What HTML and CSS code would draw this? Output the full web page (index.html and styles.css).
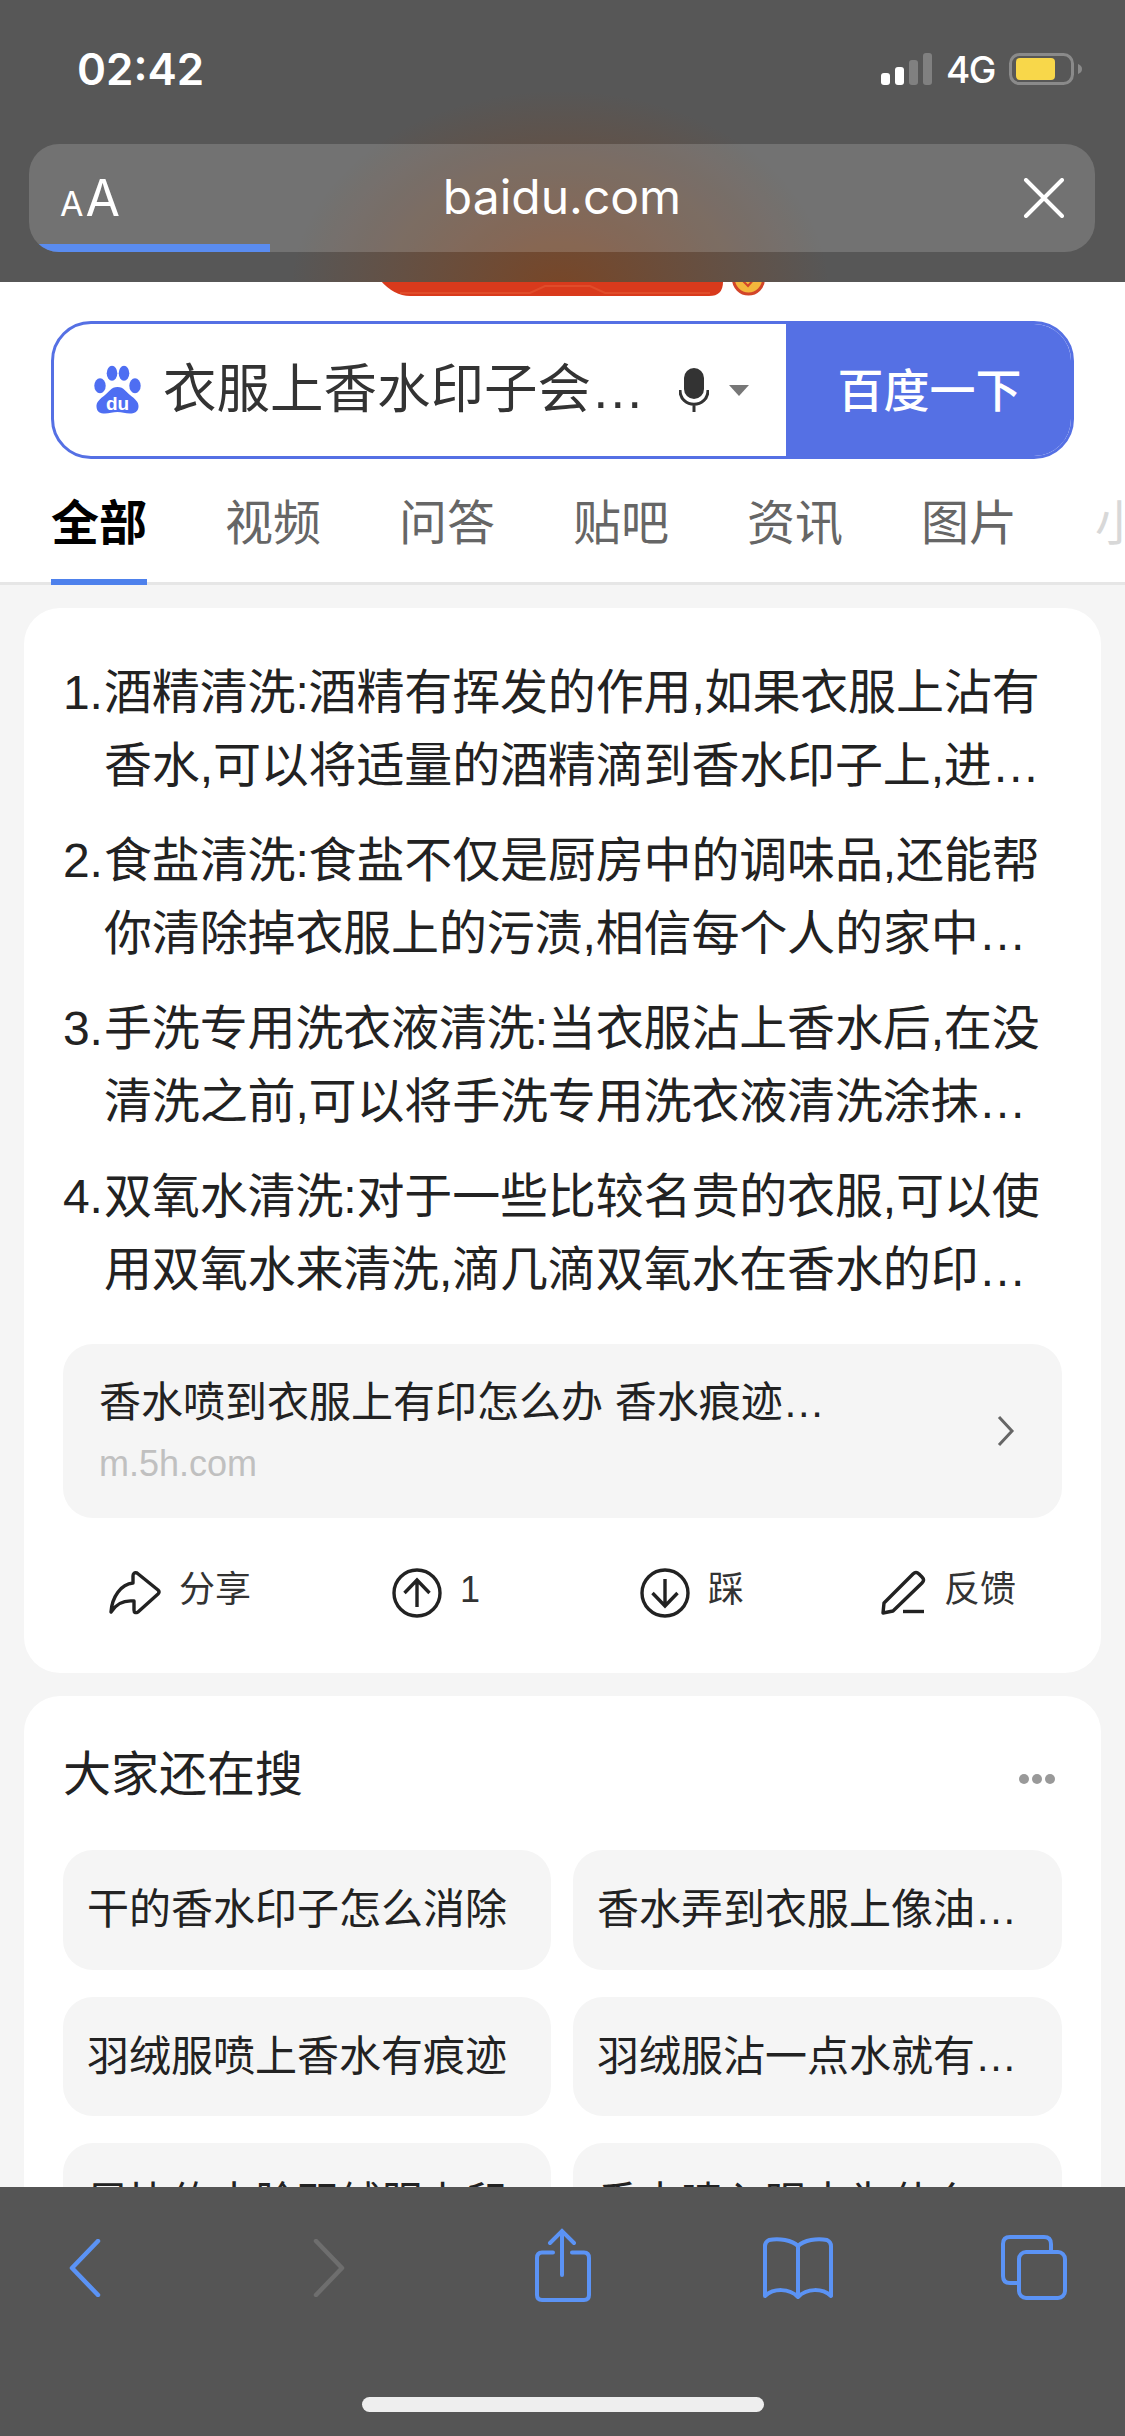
FILE: index.html
```html
<!DOCTYPE html>
<html lang="zh-CN">
<head>
  <meta charset="UTF-8" />
  <meta name="viewport" content="width=device-width, initial-scale=1.0"/>
  <title>衣服上香水印子会 - 百度</title>
  <link rel="stylesheet" href="styles.css">
</head>
<body>
  <div class="phone">
    <!-- safari top chrome, sits over the page -->
    <div class="chrome-top">
      <div class="status">
        <span class="time">02:42</span>
        <div class="status-right">
          <svg class="signal" width="51" height="32" viewBox="0 0 51 32">
            <rect x="0" y="20" width="9" height="12" rx="3" fill="#fff"/>
            <rect x="14" y="14" width="9" height="18" rx="3" fill="#fff"/>
            <rect x="28" y="7" width="9" height="25" rx="3" fill="#808080"/>
            <rect x="42" y="0" width="9" height="32" rx="3" fill="#808080"/>
          </svg>
          <span class="net">4G</span>
          <svg class="battery" width="73" height="32" viewBox="0 0 73 32">
            <rect x="1.5" y="1.5" width="62" height="29" rx="9" fill="none" stroke="#8a8a8a" stroke-width="3"/>
            <rect x="7" y="5" width="39" height="22" rx="4" fill="#f8d74a"/>
            <path d="M69 11c3 1 4 3 4 5s-1 4-4 5z" fill="#8a8a8a"/>
          </svg>
        </div>
      </div>
      <div class="urlbar">
        <span class="aa"><small>A</small>A</span>
        <span class="url">baidu.com</span>
        <svg class="close" width="42" height="40" viewBox="0 0 42 40">
          <path d="M4 2 L40 38 M40 2 L4 38" stroke="#fff" stroke-width="4" stroke-linecap="round" fill="none"/>
        </svg>
        <div class="loadbar"></div>
      </div>
    </div>

    <div class="top">
      <div class="banner">
        <svg class="banner-red" width="343" height="40" viewBox="0 0 343 40">
          <path d="M0 0H343V26Q343 40 329 40H30Q14 40 0 24Z" fill="#d93a1c"/>
          <path d="M20 37H150L165 30H210L225 37H330" fill="none" stroke="#e04c2a" stroke-width="2"/>
        </svg>
        <svg class="banner-coin" width="33" height="40" viewBox="0 0 33 40">
          <circle cx="16.5" cy="23" r="15" fill="#f3b63c" stroke="#d2452a" stroke-width="3"/>
          <path d="M10 24 L16 30 L23 22" fill="none" stroke="#d2452a" stroke-width="2"/>
        </svg>
      </div>

      <div class="search">
        <div class="search-input">
          <svg class="paw" width="48" height="50" viewBox="0 0 48 50">
            <ellipse cx="7" cy="20.7" rx="5.7" ry="7.5" fill="#4e6ef2"/>
            <ellipse cx="19" cy="8.3" rx="5.3" ry="7.5" fill="#4e6ef2"/>
            <ellipse cx="31" cy="8.3" rx="5.3" ry="7.5" fill="#4e6ef2"/>
            <ellipse cx="42" cy="20.7" rx="5.7" ry="7.5" fill="#4e6ef2"/>
            <path d="M24.500 22C31 22 33 27 37 30C42 34 46 37 45.500 42C45 47 41 48.500 37 48.500C32 48.500 29 47 24.500 47C20 47 16 48.500 12 48.500C7 48.500 4 47 3.500 42C3 37 7 34 12 30C16 27 18 22 24.500 22Z" fill="#4e6ef2"/>
            <text class="paw-du" x="24.500" y="45" text-anchor="middle">du</text>
          </svg>
          <span class="query">衣服上香水印子会…</span>
          <svg class="mic" width="30" height="44" viewBox="0 0 30 44">
            <rect x="5" y="0" width="20" height="31" rx="10" fill="#333"/>
            <path d="M1 22 C1 41 29 41 29 22 M15 35 V44" fill="none" stroke="#333" stroke-width="3"/>
          </svg>
          <span class="caret"></span>
        </div>
        <div class="search-btn"><span>百度一下</span></div>
      </div>

      <div class="tabs">
        <span class="tab active">全部</span>
        <span class="tab">视频</span>
        <span class="tab">问答</span>
        <span class="tab">贴吧</span>
        <span class="tab">资讯</span>
        <span class="tab">图片</span>
        <span class="tab faded">小说</span>
      </div>
    </div>

    <div class="card answer">
      <ol class="steps">
        <li><span class="num">1.</span><div><span class="line">酒精清洗:酒精有挥发的作用,如果衣服上沾有</span><span class="line">香水,可以将适量的酒精滴到香水印子上,进…</span></div></li>
        <li><span class="num">2.</span><div><span class="line">食盐清洗:食盐不仅是厨房中的调味品,还能帮</span><span class="line">你清除掉衣服上的污渍,相信每个人的家中…</span></div></li>
        <li><span class="num">3.</span><div><span class="line">手洗专用洗衣液清洗:当衣服沾上香水后,在没</span><span class="line">清洗之前,可以将手洗专用洗衣液清洗涂抹…</span></div></li>
        <li><span class="num">4.</span><div><span class="line">双氧水清洗:对于一些比较名贵的衣服,可以使</span><span class="line">用双氧水来清洗,滴几滴双氧水在香水的印…</span></div></li>
      </ol>

      <div class="source">
        <div>
          <div class="source-title">香水喷到衣服上有印怎么办 香水痕迹…</div>
          <div class="source-url">m.5h.com</div>
        </div>
        <svg class="source-arrow" width="18" height="32" viewBox="0 0 18 32">
          <path d="M2 2 L15 16 L2 30" fill="none" stroke="#666" stroke-width="3"/>
        </svg>
      </div>

      <div class="actions">
        <div class="action">
          <svg width="52" height="44" viewBox="0 0 52 44">
            <path d="M2 41C3 26 12 13 24 12L24 5Q24 1 28 2L49 19Q51 21 49 23L29 41Q25 43 25 39L25 30C15 29 7 33 2 41Z" fill="none" stroke="#222" stroke-width="3.400" stroke-linejoin="round"/>
          </svg>
          <span>分享</span>
        </div>
        <div class="action">
          <svg width="50" height="50" viewBox="0 0 50 50">
            <circle cx="25" cy="25" r="23" fill="none" stroke="#222" stroke-width="3.400"/>
            <path d="M25 39V12M12.500 25L25 12L37.500 25" fill="none" stroke="#222" stroke-width="3.400"/>
          </svg>
          <span>1</span>
        </div>
        <div class="action">
          <svg width="50" height="50" viewBox="0 0 50 50">
            <circle cx="25" cy="25" r="23" fill="none" stroke="#222" stroke-width="3.400"/>
            <path d="M25 11V38M12.500 25L25 38L37.500 25" fill="none" stroke="#222" stroke-width="3.400"/>
          </svg>
          <span>踩</span>
        </div>
        <div class="action">
          <svg width="46" height="46" viewBox="0 0 46 46">
            <path d="M3 43L4 33L33 4Q36 1 39 4L42 7Q45 10 42 13L13 41Z" fill="none" stroke="#222" stroke-width="3.400" stroke-linejoin="round"/>
            <path d="M23 41.500H44" fill="none" stroke="#222" stroke-width="3.400"/>
          </svg>
          <span>反馈</span>
        </div>
      </div>
    </div>

    <div class="card related">
      <div class="related-head">
        <span class="related-title">大家还在搜</span>
        <span class="dots"><i></i><i></i><i></i></span>
      </div>
      <div class="chips">
        <div class="chip"><span>干的香水印子怎么消除</span></div>
        <div class="chip"><span>香水弄到衣服上像油…</span></div>
        <div class="chip"><span>羽绒服喷上香水有痕迹</span></div>
        <div class="chip"><span>羽绒服沾一点水就有…</span></div>
        <div class="chip"><span>早比约水脸羽绒服上印</span></div>
        <div class="chip"><span>香水喷入眼中为什么…</span></div>
      </div>
    </div>

    <!-- safari bottom toolbar -->
    <div class="chrome-bottom">
      <div class="tools">
        <svg class="tool tool-back" width="32" height="58" viewBox="0 0 32 58">
          <path d="M29 2L3 29L29 56" fill="none" stroke="#5b93f5" stroke-width="4.500" stroke-linecap="round" stroke-linejoin="round"/>
        </svg>
        <svg class="tool tool-forward" width="32" height="58" viewBox="0 0 32 58">
          <path d="M3 2L29 29L3 56" fill="none" stroke="#6e6e6e" stroke-width="4.500" stroke-linecap="round" stroke-linejoin="round"/>
        </svg>
        <svg class="tool tool-share" width="60" height="80" viewBox="0 0 60 80">
          <path d="M30 3V47M18 15L30 3L42 15M21 24.500H10Q5 24.500 5 30V67Q5 72 10 72H52Q57 72 57 67V30Q57 24.500 52 24.500H40" fill="none" stroke="#5b93f5" stroke-width="4" stroke-linecap="round"/>
        </svg>
        <svg class="tool tool-book" width="74" height="64" viewBox="0 0 74 64">
          <path d="M37 10C31 4 18 2 8 4Q4 6 4 10V60C13 52 28 52 37 61C46 52 61 52 70 60V10Q70 6 66 4C56 2 43 4 37 10ZM37 10V61" fill="none" stroke="#5b93f5" stroke-width="4" stroke-linejoin="round"/>
        </svg>
        <svg class="tool tool-tabs" width="70" height="70" viewBox="0 0 70 70">
          <rect x="20" y="19" width="46" height="46" rx="7" fill="none" stroke="#5b93f5" stroke-width="4"/>
          <path d="M52 17V11Q52 4 45 4H11Q4 4 4 11V43Q4 50 11 50H18" fill="none" stroke="#5b93f5" stroke-width="4"/>
        </svg>
      </div>
      <div class="home-bar"></div>
    </div>
  </div>
</body>
</html>
```

FILE: styles.css
```css
body {
  margin: 0;
  padding: 0;
  background: #f5f5f5;
  font-family: "Liberation Sans", "Noto Sans CJK SC", sans-serif;
  color: #222;
}

.phone {
  position: relative;
  width: 1125px;
  height: 2436px;
  overflow: hidden;
}

/* top chrome */
.chrome-top {
  position: absolute;
  top: 0;
  left: 0;
  right: 0;
  height: 282px;
  z-index: 2;
  background: radial-gradient(ellipse 270px 200px at 560px 290px, rgba(140, 60, 10, 0.62), rgba(87, 87, 87, 0) 100%), #575757;
  font-family: "Inter", "Liberation Sans", sans-serif;
  color: #fff;
}

.status {
  display: flex;
  justify-content: space-between;
  align-items: center;
  height: 32px;
  padding: 53px 43px 0 77px;
}

.time {
  font-size: 44px;
  font-weight: 600;
}

.status-right {
  display: flex;
  align-items: center;
}

.net {
  margin: 0 14px 0 14px;
  font-size: 37px;
  font-weight: 500;
  letter-spacing: -1.5px;
}

.urlbar {
  position: relative;
  display: grid;
  grid-template-columns: 1fr auto 1fr;
  align-items: center;
  height: 108px;
  margin: 59px 30px 0 29px;
  padding: 0 31px;
  border-radius: 30px;
  background: rgba(255, 255, 255, 0.16);
  overflow: hidden;
}

.aa {
  font-size: 50px;
}

.aa small {
  font-size: 34px;
  margin-right: 2px;
}

.url {
  padding-bottom: 3px;
  font-size: 48px;
}

.close {
  justify-self: end;
}

.loadbar {
  position: absolute;
  left: 0;
  bottom: 0;
  width: 241px;
  height: 8px;
  background: #5a8cf0;
}

/* page header */
.top {
  background: #fff;
}

.banner {
  display: flex;
  align-items: flex-end;
  gap: 9px;
  height: 296px;
  padding-left: 380px;
}

.search {
  display: flex;
  height: 138px;
  margin: 25px 51px 0 51px;
  border: 3px solid #5570e4;
  border-radius: 40px;
  box-sizing: border-box;
  overflow: hidden;
}

.search-input {
  display: flex;
  align-items: center;
  flex: 1;
  padding-left: 39px;
}

.query {
  margin-left: 22px;
  width: 516px;
  font-size: 53.500px;
  line-height: 1;
  color: #333;
  white-space: nowrap;
}

.paw-du {
  font-size: 19px;
  font-weight: 700;
  fill: #fff;
}

.caret {
  margin-left: 20px;
  border-left: 10px solid transparent;
  border-right: 10px solid transparent;
  border-top: 11px solid #777;
}

.search-btn {
  display: flex;
  align-items: center;
  justify-content: center;
  width: 285px;
  padding-left: 2px;
  box-sizing: border-box;
  background: #5570e4;
  color: #fff;
  font-size: 46px;
  font-weight: 500;
}

.search-btn span {
  padding-bottom: 6px;
}

.tabs {
  display: flex;
  gap: 78px;
  height: 126px;
  padding-left: 51px;
  border-bottom: 3px solid #e6e6e6;
  box-sizing: border-box;
  font-size: 48px;
  line-height: 48px;
  color: #666;
  white-space: nowrap;
}

.tab {
  padding-top: 41px;
  margin-bottom: -3px;
  border-bottom: 6px solid transparent;
}

.tab.active {
  color: #000;
  font-weight: 700;
  border-bottom-color: #4e81ec;
}

.tab.faded {
  color: #d8d8d8;
}

/* cards */
.card {
  margin: 23px 24px 0;
  padding: 0 39px;
  background: #fff;
  border-radius: 36px;
}

.answer {
  height: 1065px;
  box-sizing: border-box;
  padding-top: 48px;
}

.steps {
  display: flex;
  flex-direction: column;
  gap: 22px;
  margin: 0;
  padding: 0;
  list-style: none;
  font-size: 48px;
  line-height: 73px;
  letter-spacing: -0.15px;
  color: #222;
}

.steps li {
  display: flex;
}

.num {
  width: 41px;
  flex: none;
}

.line {
  display: block;
  white-space: nowrap;
}

.source {
  display: flex;
  align-items: center;
  justify-content: space-between;
  height: 174px;
  margin-top: 38px;
  padding: 0 47px 0 36px;
  background: #f5f5f5;
  border-radius: 30px;
  box-sizing: border-box;
}

.source-title {
  margin-top: -3px;
  font-size: 42px;
  line-height: 56px;
  color: #222;
  white-space: nowrap;
}

.source-url {
  margin-top: 13px;
  font-size: 36px;
  line-height: 40px;
  color: #c0c0c0;
}

.actions {
  display: grid;
  grid-template-columns: repeat(4, 256px);
  grid-auto-rows: 50px;
  margin: 50px -11px 0;
}

.action {
  display: flex;
  align-items: center;
  justify-content: center;
  gap: 18px;
  font-size: 36px;
  line-height: 36px;
  color: #333;
}

.action span {
  padding-bottom: 6px;
}

.related {
  height: 800px;
  padding-top: 43px;
}

.related-head {
  display: flex;
  align-items: center;
  justify-content: space-between;
  height: 72px;
}

.related-title {
  font-size: 48px;
  line-height: 72px;
  color: #222;
}

.dots {
  display: flex;
  gap: 3px;
  margin: 8px 7px 0 0;
}

.dots i {
  width: 10px;
  height: 10px;
  border-radius: 50%;
  background: #999;
}

.chips {
  display: grid;
  grid-template-columns: 488px 489px;
  grid-auto-rows: 119.500px;
  gap: 27px 22px;
  margin-top: 39px;
}

.chip {
  display: flex;
  align-items: center;
  padding-left: 24px;
  background: #f5f5f5;
  border-radius: 30px;
  font-size: 42px;
  color: #222;
  white-space: nowrap;
}

.chip span {
  padding-bottom: 8px;
}

/* bottom toolbar */
.chrome-bottom {
  position: absolute;
  left: 0;
  right: 0;
  bottom: 0;
  height: 249px;
  z-index: 2;
  background: #555;
}

.tools {
  display: flex;
  align-items: center;
  height: 80px;
  margin-top: 41px;
  padding-left: 69px;
}

.tool-forward { margin-left: 212px; }
.tool-share { margin-left: 187px; }
.tool-book { margin-left: 169px; }
.tool-tabs { margin-left: 164px; }

.home-bar {
  width: 402px;
  height: 15px;
  margin: 89px auto 0;
  border-radius: 8px;
  background: #eee;
}
```
